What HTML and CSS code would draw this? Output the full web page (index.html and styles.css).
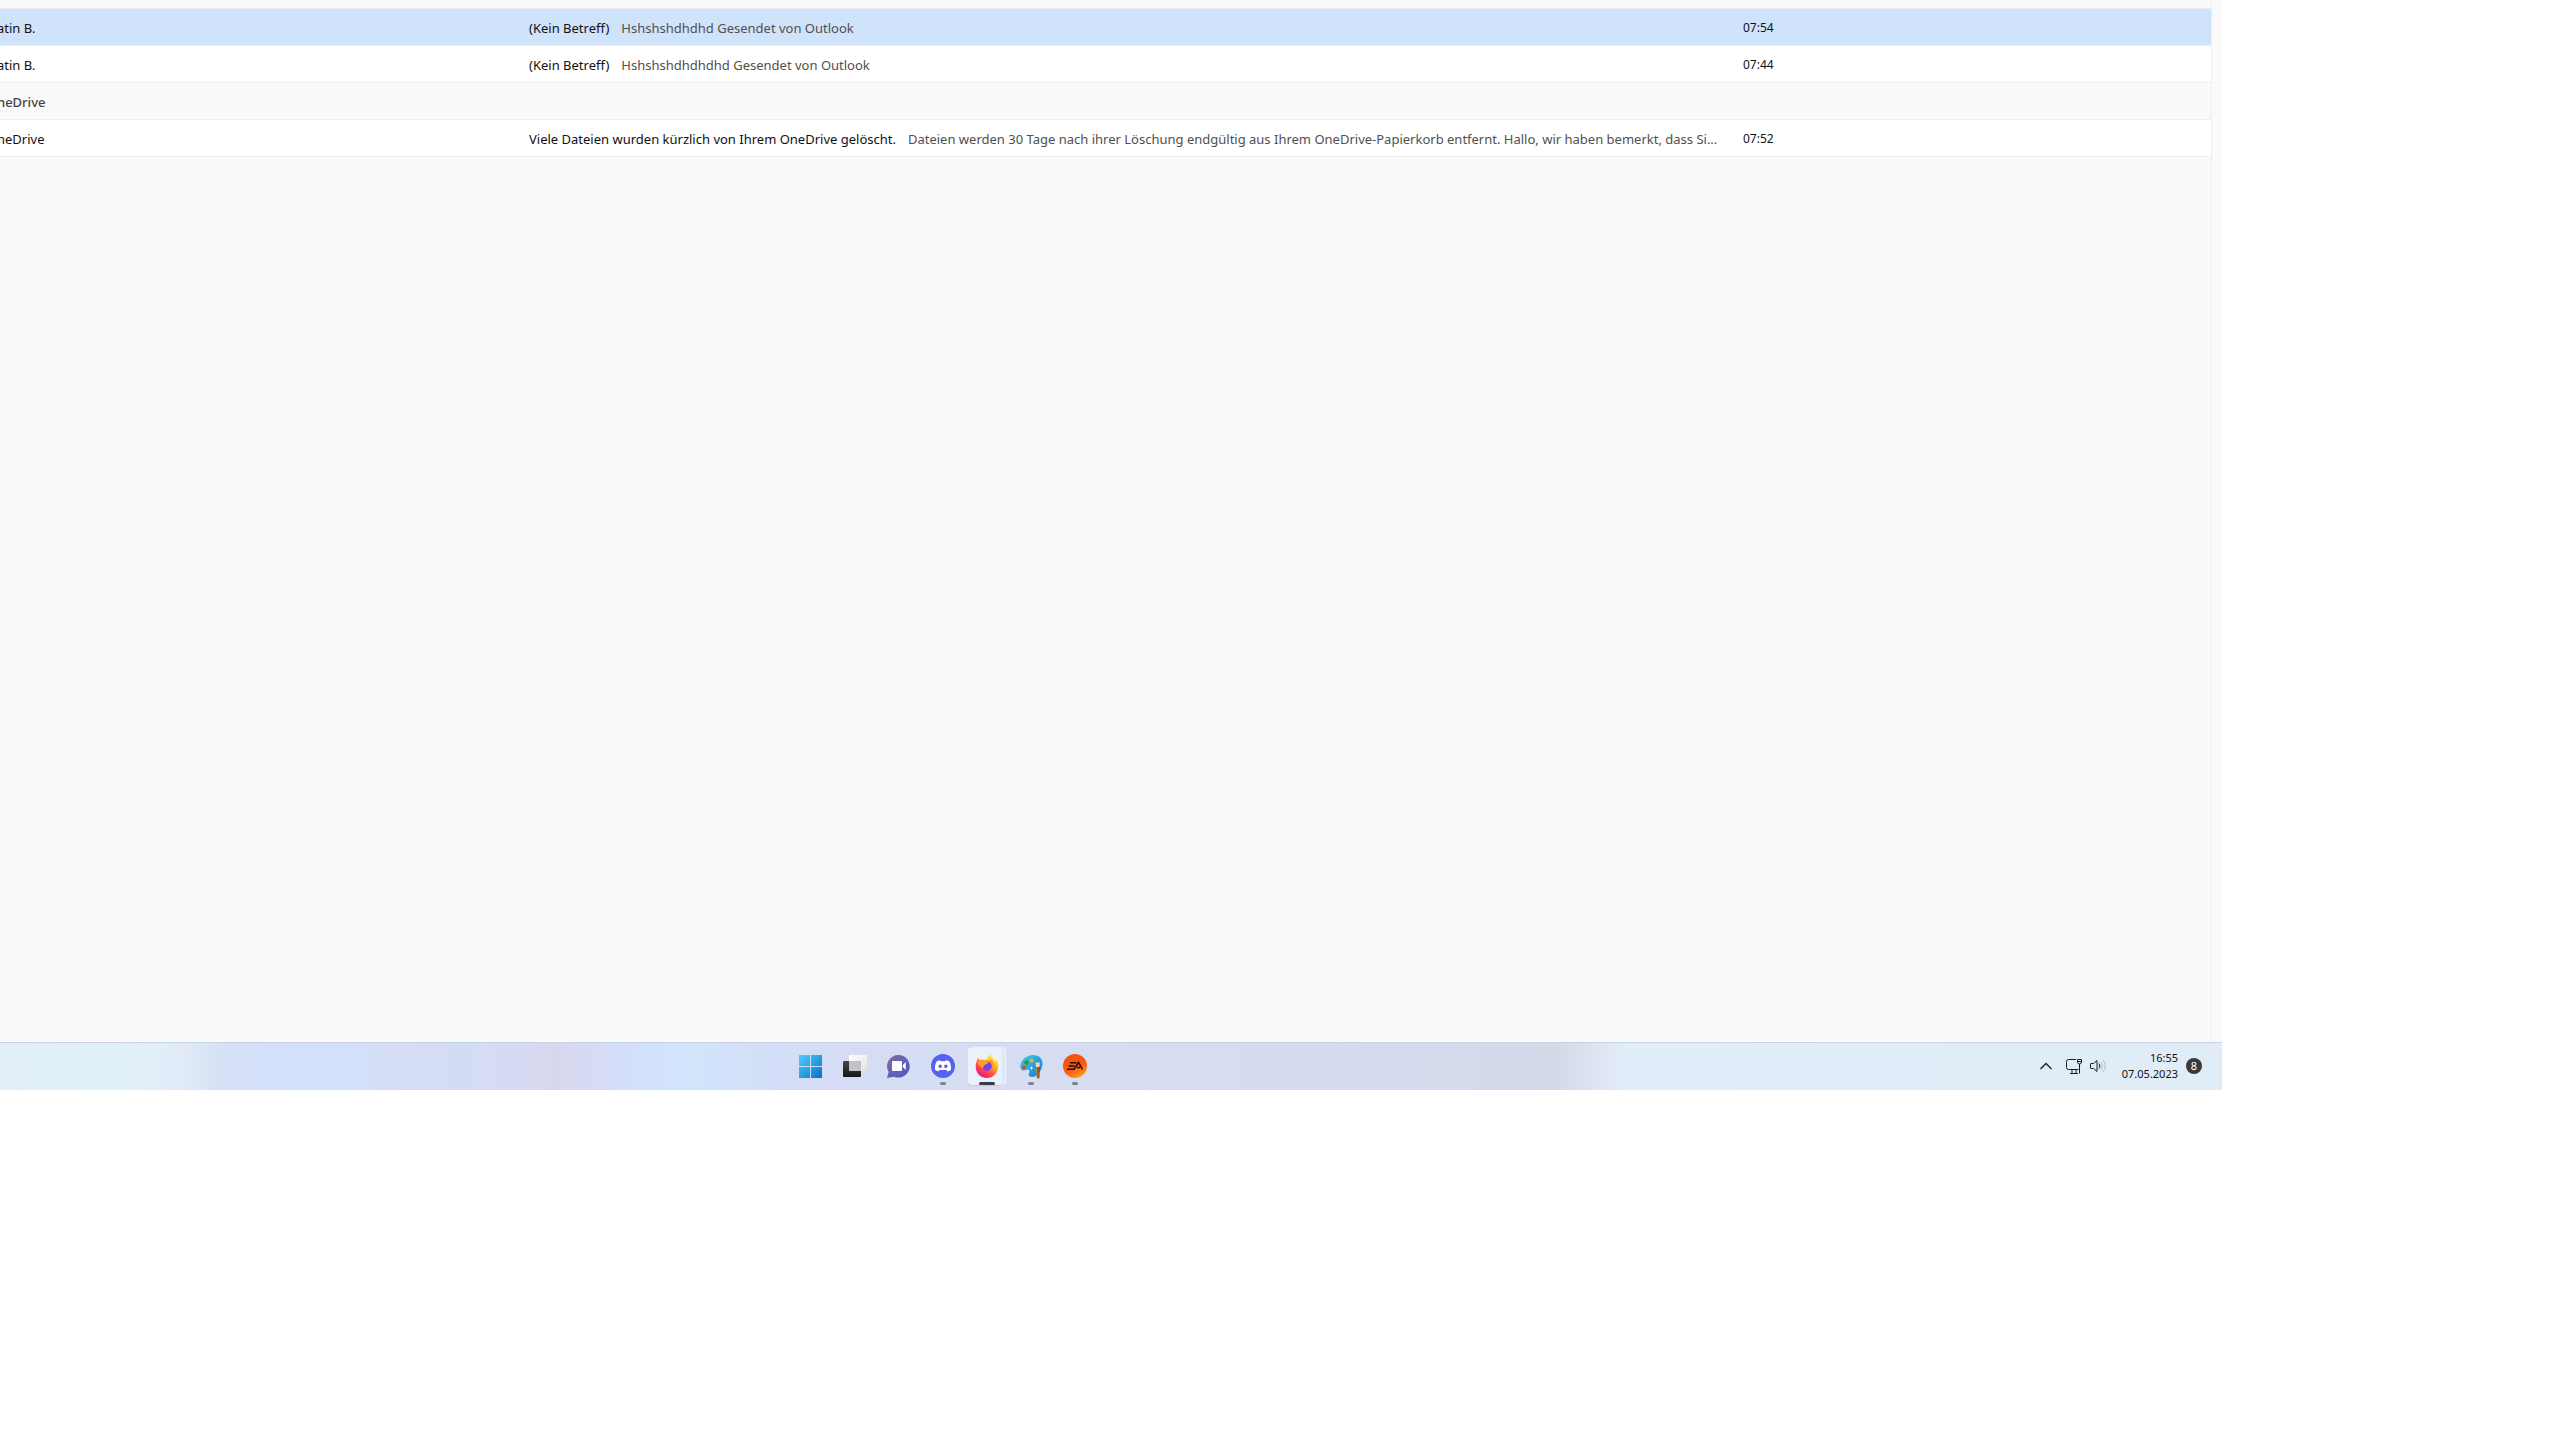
FILE: index.html
```
<!DOCTYPE html>
<html lang="de">
<head>
    <meta charset="UTF-8">
    <meta name="viewport" content="width=device-width, initial-scale=1.0">
    <title>Outlook</title>
    <link rel="stylesheet" href="styles.css">
</head>
<body>

    <main class="mail-window">
        <table class="mail-list">
            <colgroup>
                <col class="col-sender">
                <col>
                <col class="col-time">
            </colgroup>
            <tbody>
                <tr class="mail selected">
                    <td class="sender">atin B.</td>
                    <td class="subject">(Kein Betreff)<span class="preview">Hshshshdhdhd Gesendet von Outlook</span></td>
                    <td class="time">07:54</td>
                </tr>
                <tr class="mail">
                    <td class="sender">atin B.</td>
                    <td class="subject">(Kein Betreff)<span class="preview">Hshshshdhdhdhd Gesendet von Outlook</span></td>
                    <td class="time">07:44</td>
                </tr>
                <tr class="group">
                    <th class="sender" colspan="3">neDrive</th>
                </tr>
                <tr class="mail">
                    <td class="sender">neDrive</td>
                    <td class="subject">Viele Dateien wurden kürzlich von Ihrem OneDrive gelöscht.<span class="preview">Dateien werden 30 Tage nach ihrer Löschung endgültig aus Ihrem OneDrive-Papierkorb entfernt. Hallo, wir haben bemerkt, dass Si...</span></td>
                    <td class="time">07:52</td>
                </tr>
            </tbody>
        </table>
    </main>

    <footer class="taskbar">
        <nav class="apps">
            <button class="app" aria-label="Start">
                <svg width="24" height="24" viewBox="1 0 24 24">
                    <defs>
                        <linearGradient id="win" x1="0" y1="0" x2="1" y2="1">
                            <stop offset="0" stop-color="#4fd0fb"/>
                            <stop offset="1" stop-color="#0a70cc"/>
                        </linearGradient>
                    </defs>
                    <path fill="url(#win)" d="M1 1h11v11H1zM13 1h11v11H13zM1 13h11v11H1zM13 13h11v11H13z"/>
                </svg>
            </button>
            <button class="app" aria-label="Aktive Anwendungen">
                <svg width="24" height="24" viewBox="1 0 24 24">
                    <defs>
                        <linearGradient id="tvDark" x1="0" y1="0" x2="0" y2="1">
                            <stop offset="0" stop-color="#444"/>
                            <stop offset="1" stop-color="#161616"/>
                        </linearGradient>
                        <linearGradient id="tvLight" x1="0" y1="0" x2="1" y2="1">
                            <stop offset="0" stop-color="#fff"/>
                            <stop offset="1" stop-color="#e2e2e4"/>
                        </linearGradient>
                    </defs>
                    <rect x="1" y="7" width="18" height="16" rx="1" fill="url(#tvDark)"/>
                    <rect x="7" y="1" width="18" height="16" rx="1" fill="url(#tvLight)"/>
                    <path fill="#c3c3c5" d="M7 7h12v10H7z"/>
                </svg>
            </button>
            <button class="app" aria-label="Chat">
                <svg width="24" height="24" viewBox="1 0 24 24">
                    <defs>
                        <linearGradient id="chat" x1="0" y1="0" x2="1" y2="1">
                            <stop offset="0" stop-color="#96669f"/>
                            <stop offset=".45" stop-color="#6264b8"/>
                            <stop offset="1" stop-color="#5753bd"/>
                        </linearGradient>
                    </defs>
                    <path fill="url(#chat)" d="M12.500 1a11.300 11.300 0 1 1-4.500 21.700L1 24l1.600-6A11.300 11.300 0 0 1 12.500 1z"/>
                    <rect x="6" y="7" width="10" height="10" rx="1" fill="#fff"/>
                    <path fill="#fff" d="M16.800 11l3-3v8l-3-3z"/>
                </svg>
            </button>
            <button class="app running" aria-label="Discord">
                <svg width="24" height="24" viewBox="0 0 24 24">
                    <circle cx="12" cy="12" r="12" fill="#5562f0"/>
                    <path fill="#fff" d="M8.700 6.300L10 7.300h4l1.300-1L18.200 7.300c1.500 2.500 2.100 5.500 1.800 8.500-1 .9-2.100 1.400-3.500 1.700L15.500 16h-7l-1 1.500C6.100 17.200 5 16.700 4 15.800c-.3-3 .3-6 1.800-8.500z"/>
                    <circle cx="9.200" cy="12.200" r="1.700" fill="#5562f0"/>
                    <circle cx="14.800" cy="12.200" r="1.700" fill="#5562f0"/>
                </svg>
            </button>
            <button class="app running active" aria-label="Firefox">
                <svg width="24" height="24" viewBox="0 0 24 24">
                    <defs>
                        <linearGradient id="fox" x1=".8" y1=".1" x2=".25" y2=".95">
                            <stop offset="0" stop-color="#fff13e"/>
                            <stop offset=".35" stop-color="#ffb02c"/>
                            <stop offset=".65" stop-color="#ff503c"/>
                            <stop offset="1" stop-color="#e9168c"/>
                        </linearGradient>
                    </defs>
                    <path fill="url(#fox)" d="M3.500 3.500C3.700 5 4.200 5.700 5 6c1.100-.5 2.200-.5 3.400-.3L12 5.500c.6-2.500 1.900-4.100 3.900-5.300.4 3 3.300 4.300 4.900 7l.4-2c1.700 2.400 2.300 5 2 8.300C22.500 19.500 17.800 24 12 24 5.700 24 1 19.300.7 13.200.6 9.500 1.700 6.200 3.500 3.500z"/>
                    <circle cx="12" cy="12.200" r="4.800" fill="#7a3fe0"/>
                    <path fill="#ffa02e" d="M2.500 8.200c2.500-2.100 5.100-2.600 7.600-.7l3.600.5c-.4 1.700-2 2.300-3.600 2.700-1.700.7-2 1.800-1.400 3.300-2.900-.4-5-2.600-6.200-5.800z"/>
                    <path fill="#ff8a30" d="M13 7.300c3 .2 5 2.700 4.600 6 1.700-2.700.7-6-1.600-7.300z"/>
                </svg>
            </button>
            <button class="app running" aria-label="Paint">
                <svg width="24" height="24" viewBox="0 0 24 24">
                    <defs>
                        <linearGradient id="paint" x1="0" y1="0" x2="1" y2="1">
                            <stop offset="0" stop-color="#45cdea"/>
                            <stop offset="1" stop-color="#1478cf"/>
                        </linearGradient>
                        <linearGradient id="brush" x1="0" y1="0" x2="1" y2="0">
                            <stop offset="0" stop-color="#c98a3e"/>
                            <stop offset="1" stop-color="#6e4318"/>
                        </linearGradient>
                    </defs>
                    <path fill="url(#paint)" d="M14 1c5.500 0 9.500 3 9.500 8.500 0 6-5 13.500-10.500 13.500-3.700 0-3.700-2.600-2.700-4.700.8-1.900-.8-3.300-2.700-2.500C4 17.300 1.300 16 1.300 12.500 1.300 6 7.500 1 14 1z"/>
                    <circle cx="12.700" cy="6.500" r="2.100" fill="#f9ac26"/>
                    <circle cx="7.500" cy="8.500" r="2.200" fill="#2f9a36"/>
                    <circle cx="4.800" cy="13.300" r="1.900" fill="#d6482c"/>
                    <path fill="none" stroke="#d8f5ff" d="M12.500 12.500v3M11 14h3"/>
                    <path fill="#f0d9ae" d="M16.500 8.500h4.500l-.6 4.500h-3.300z"/>
                    <path fill="url(#brush)" d="M17 13h3.500v10c0 2-3 2-3 0z"/>
                </svg>
            </button>
            <button class="app running" aria-label="EA">
                <svg width="24" height="24" viewBox="0 0 24 24">
                    <defs>
                        <linearGradient id="ea" x1=".2" y1="0" x2=".7" y2="1">
                            <stop offset="0" stop-color="#f2500f"/>
                            <stop offset=".6" stop-color="#fb5a10"/>
                            <stop offset="1" stop-color="#ffa01c"/>
                        </linearGradient>
                    </defs>
                    <circle cx="12" cy="12" r="12" fill="url(#ea)"/>
                    <path fill="none" stroke="#160c10" stroke-width="1.500" d="M7 8.700h6.500M5.500 12h6M4 15.300h7L15.500 8.500l4 7M14 13.500h3"/>
                </svg>
            </button>
        </nav>

        <div class="tray">
            <button class="tray-btn" aria-label="Ausgeblendete Symbole einblenden">
                <svg width="16" height="16" viewBox="0 0 16 16"><path stroke-width="1.300" d="M2.500 11L8 5.500l5.500 5.500"/></svg>
            </button>
            <button class="tray-btn status" aria-label="Netzwerk und Lautstärke">
                <svg width="16" height="16" viewBox="0 0 16 16">
                    <path d="M10 1.500H2.500q-2 0-2 2v6q0 2 2 2h10M4 15.500h8M6 11.500v4M10 11.500v4M13.500 6v9.500M11.500 1.500h4V4q0 2-2 2t-2-2zM11.500 3.500h4"/>
                </svg>
                <svg width="16" height="16" viewBox="0 0 16 16">
                    <path d="M.5 6q0-.5.5-.5h2.500L7 2.500v11l-3.500-3H1q-.5 0-.5-.5zM9 5.500q1.800 2.500 0 5"/>
                    <path class="faint" d="M11 4q3 4 0 8M13 2q4.500 6 0 12"/>
                </svg>
            </button>
            <button class="clock"><span>16:55</span><span>07.05.2023</span></button>
            <span class="badge">8</span>
        </div>
    </footer>

</body>
</html>
```
FILE: styles.css
```
* {
    box-sizing: border-box;
}

body {
    font-family: "Noto Sans", "Open Sans", sans-serif;
    margin: 0;
    padding: 0 338px 350px 0;
    height: 100vh;
    display: flex;
    flex-direction: column;
    background: white;
    color: #111;
}

button {
    font-family: inherit;
    border: none;
    background: transparent;
    padding: 0;
    color: inherit;
}

svg {
    display: block;
    overflow: visible;
}

.mail-window {
    flex: 1;
    background: #fafafa;
    padding: 8px 10px 0 0;
    background-image: linear-gradient(#eeeeee, #eeeeee);
    background-size: 1px 100%;
    background-position: right 10px top;
    background-repeat: no-repeat;
}

.mail-list {
    width: calc(100% - 1px);
    table-layout: fixed;
    border-spacing: 0;
    border-top: 1px solid #eeeeee;
    font-size: 13px;
    line-height: 20px;
}

.col-sender {
    width: 529px;
}

.col-time {
    width: 468px;
}

.mail-list td,
.mail-list th {
    height: 37px;
    padding: 2px 0 0;
    border-bottom: 1px solid #eeeeee;
    text-align: left;
}

.mail {
    background: white;
}

.selected {
    background: #cfe3fb;
}

/* the list continues past the left edge of the window */
.sender {
    text-indent: -3px;
}

.group th {
    font-weight: 500;
    color: #444;
}

.subject {
    overflow: hidden;
    white-space: nowrap;
    text-overflow: ellipsis;
}

.mail-list .subject {
    padding-right: 20px;
}

.preview {
    margin-left: 12px;
    color: #505050;
}

.mail-list .time {
    font-size: 12px;
}

.taskbar {
    height: 48px;
    display: flex;
    justify-content: space-between;
    padding: 0 20px 1px 789px;
    border-top: 1px solid #c9d3e6;
    background: linear-gradient(90deg, #e2eef8 0, #e0f1f9 5%, #e2ecf8 8%, #d6e1f6 10%, #d4e0fa 12%, #d3e0f9 16%, #d6dcf6 18%, #d2ddf1 21%, #d6dcf6 22%, #d7d8ee 25%, #d4defa 28%, #d1e5fb 31%, #d4ddf7 35%, #d7ddf1 48%, #d6daef 63%, #d4dae8 70%, #dfe5f3 72%, #e1edf9 73%, #e0edf7 100%);
}

.apps {
    display: flex;
}

.app {
    position: relative;
    width: 44px;
    display: flex;
    align-items: center;
    padding-left: 10px;
}

.running::after {
    content: "";
    position: absolute;
    left: 19px;
    bottom: 4px;
    width: 6px;
    height: 3px;
    border-radius: 2px;
    background: #7d818c;
}

.active::before {
    content: "";
    position: absolute;
    left: 3px;
    top: 4px;
    width: 34px;
    height: 38px;
    border-radius: 4px;
    background: #ecf0fa;
    box-shadow: 3px 0 0 #e2e6f4, 4px 0 0 #f2f4fb, 0 1px 1px #c0c6d8;
}

.active svg {
    position: relative;
}

.active::after {
    left: 14px;
    width: 16px;
    background: #3b3d45;
}

.tray {
    display: flex;
    align-items: center;
}

.tray-btn {
    display: flex;
    gap: 8px;
}

.tray-btn path {
    fill: none;
    stroke: #1c1f22;
}

.tray-btn .faint {
    stroke: #b4bdc6;
}

.status {
    margin-left: 12px;
}

.clock {
    width: 72px;
    display: flex;
    flex-direction: column;
    align-items: flex-end;
    font-size: 11px;
    line-height: 16px;
}

.badge {
    width: 16px;
    height: 16px;
    margin-left: 8px;
    border-radius: 50%;
    background: #3a3a3c;
    color: white;
    font-size: 11px;
    line-height: 16px;
    text-align: center;
}
```
